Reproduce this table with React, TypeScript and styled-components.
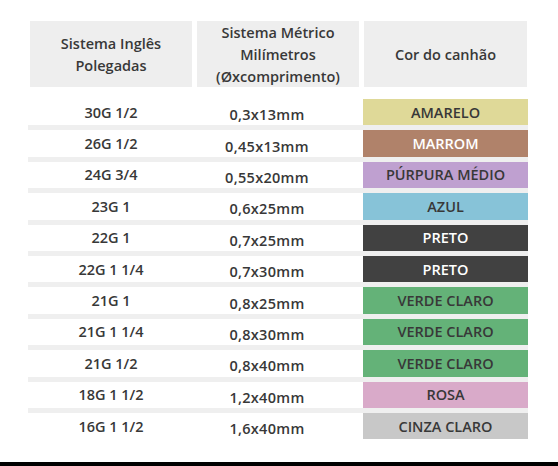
import styled, { createGlobalStyle } from "styled-components";

const GlobalStyle = createGlobalStyle`
  html, body {
    margin: 0;
    padding: 0;
    background: #ffffff;
  }
  body {
    font-family: "Open Sans", "Liberation Sans", sans-serif;
    color: #383838;
  }
`;

type Row = {
  gauge: string;
  size: string;
  color: string;
  bg: string;
  light?: boolean;
};

const rows: Row[] = [
  { gauge: "30G 1/2", size: "0,3x13mm", color: "AMARELO", bg: "#dfd998" },
  { gauge: "26G 1/2", size: "0,45x13mm", color: "MARROM", bg: "#b0826a", light: true },
  { gauge: "24G 3/4", size: "0,55x20mm", color: "PÚRPURA MÉDIO", bg: "#bfa0d0" },
  { gauge: "23G 1", size: "0,6x25mm", color: "AZUL", bg: "#87c3d8" },
  { gauge: "22G 1", size: "0,7x25mm", color: "PRETO", bg: "#414141", light: true },
  { gauge: "22G 1 1/4", size: "0,7x30mm", color: "PRETO", bg: "#414141", light: true },
  { gauge: "21G 1", size: "0,8x25mm", color: "VERDE CLARO", bg: "#64b278" },
  { gauge: "21G 1 1/4", size: "0,8x30mm", color: "VERDE CLARO", bg: "#64b278" },
  { gauge: "21G 1/2", size: "0,8x40mm", color: "VERDE CLARO", bg: "#64b278" },
  { gauge: "18G 1 1/2", size: "1,2x40mm", color: "ROSA", bg: "#d9aac9" },
  { gauge: "16G 1 1/2", size: "1,6x40mm", color: "CINZA CLARO", bg: "#c8c8c8" },
];

const Page = styled.div`
  width: 558px;
  height: 466px;
  display: flex;
  flex-direction: column;
  overflow: hidden;
`;

const Table = styled.div`
  padding: 21px 0 0 28px;
  display: flex;
  flex-direction: column;
`;

const HeaderRow = styled.div`
  display: grid;
  grid-template-columns: 162px 162px 163px;
  column-gap: 5px;
  margin-left: 2px;
  margin-bottom: 12px;
`;

const HeaderCell = styled.div`
  background: #eeeeee;
  height: 66px;
  display: flex;
  align-items: center;
  justify-content: center;
  text-align: center;
  font-size: 14.5px;
  font-weight: 600;
  line-height: 22px;
  padding-top: 1px;
  box-sizing: border-box;
`;

const BodyRow = styled.div`
  width: 500px;
  height: 26.4px;
  display: grid;
  grid-template-columns: 166px 146px 1fr;
  align-items: center;
  font-size: 14.5px;
  font-weight: 600;

  & + & {
    border-top: 5px solid #efefef;
  }
`;

const Gauge = styled.div`
  text-align: center;
`;

const Size = styled.div`
  text-align: center;
  padding-top: 5px;
  letter-spacing: 0.3px;
`;

const Swatch = styled.div<{ $bg: string; $light?: boolean }>`
  justify-self: end;
  width: 165px;
  height: 100%;
  display: flex;
  align-items: center;
  justify-content: center;
  background: ${(p) => p.$bg};
  color: ${(p) => (p.$light ? "#ffffff" : "#383838")};
  font-size: 14.5px;
`;

const Spacer = styled.div`
  flex: 1;
`;

const BottomBar = styled.div`
  height: 4px;
  background: #000000;
`;

export default function App() {
  return (
    <>
      <GlobalStyle />
      <Page>
        <Table>
          <HeaderRow>
            <HeaderCell>
              Sistema Inglês
              <br />
              Polegadas
            </HeaderCell>
            <HeaderCell>
              Sistema Métrico
              <br />
              Milímetros
              <br />
              (Øxcomprimento)
            </HeaderCell>
            <HeaderCell>Cor do canhão</HeaderCell>
          </HeaderRow>
          {rows.map((r, i) => (
            <BodyRow key={i}>
              <Gauge>{r.gauge}</Gauge>
              <Size>{r.size}</Size>
              <Swatch $bg={r.bg} $light={r.light}>
                {r.color}
              </Swatch>
            </BodyRow>
          ))}
        </Table>
        <Spacer />
        <BottomBar />
      </Page>
    </>
  );
}
